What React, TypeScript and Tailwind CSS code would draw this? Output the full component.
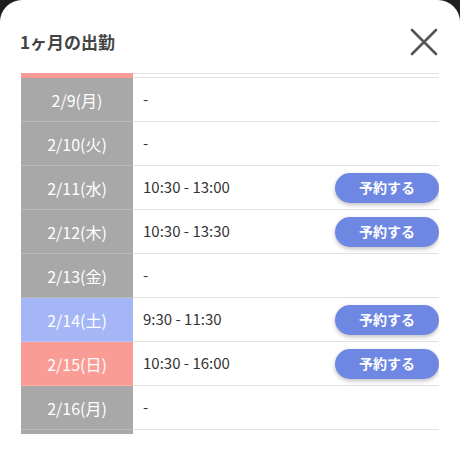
import React from "react";

type Day = { date: string; time: string; kind: "normal" | "sat" | "sun"; bookable?: boolean };

const days: Day[] = [
  { date: "2/9(月)", time: "-", kind: "normal" },
  { date: "2/10(火)", time: "-", kind: "normal" },
  { date: "2/11(水)", time: "10:30 - 13:00", kind: "normal", bookable: true },
  { date: "2/12(木)", time: "10:30 - 13:30", kind: "normal", bookable: true },
  { date: "2/13(金)", time: "-", kind: "normal" },
  { date: "2/14(土)", time: "9:30 - 11:30", kind: "sat", bookable: true },
  { date: "2/15(日)", time: "10:30 - 16:00", kind: "sun", bookable: true },
  { date: "2/16(月)", time: "-", kind: "normal" },
];

const cellBg = {
  normal: "bg-[#a8a8a8] border-[#b9b9b9]",
  sat: "bg-[#a5b6f7] border-[#b6c3f8]",
  sun: "bg-[#f99c95] border-[#fbb0aa]",
};

const Row = ({ day }: { day: Day }) => (
  <div className="flex h-[44px] shrink-0">
    <div className={`w-[112px] shrink-0 flex items-center justify-center border-b text-[16px] text-white ${cellBg[day.kind]}`}>
      {day.date}
    </div>
    <div className="flex-1 flex items-center justify-between pl-[10px] border-b border-[#e2e2e2] text-[15px] text-[#333]">
      <span>{day.time}</span>
      {day.bookable && (
        <button className="w-[104px] h-[30px] rounded-full bg-[#6e87e3] text-white text-[14px] font-bold shadow-[0_2px_4px_rgba(0,0,0,0.25)]">
          予約する
        </button>
      )}
    </div>
  </div>
);

export default function App() {
  return (
    <div className="w-[460px] h-[464px] bg-[#1f1f1f]" style={{ fontFamily: '"Noto Sans CJK JP", "Noto Sans", sans-serif' }}>
      <div className="h-full bg-white rounded-t-[22px] overflow-hidden">
        <div className="flex items-center justify-between h-[73px] pl-5 pr-[22px] pt-[10px]">
          <h2 className="text-[17px] font-bold text-[#444] leading-[26px]">1ヶ月の出勤</h2>
          <svg width="28" height="28" viewBox="0 0 28 28" fill="none" stroke="#555" strokeWidth="2.6" strokeLinecap="round">
            <path d="M2 2L26 26M26 2L2 26" />
          </svg>
        </div>
        <div className="mx-[21px] h-[361px] overflow-hidden flex flex-col">
          {/* bottom of the row scrolled past */}
          <div className="flex h-[5px] shrink-0">
            <div className="w-[112px] bg-[#f99c95]" />
            <div className="flex-1 border-t border-b border-[#e2e2e2]" />
          </div>
          {days.map((d) => (
            <Row key={d.date} day={d} />
          ))}
          {/* top of the next row */}
          <div className="flex h-[44px] shrink-0">
            <div className="w-[112px] bg-[#a8a8a8]" />
            <div className="flex-1" />
          </div>
        </div>
      </div>
    </div>
  );
}
